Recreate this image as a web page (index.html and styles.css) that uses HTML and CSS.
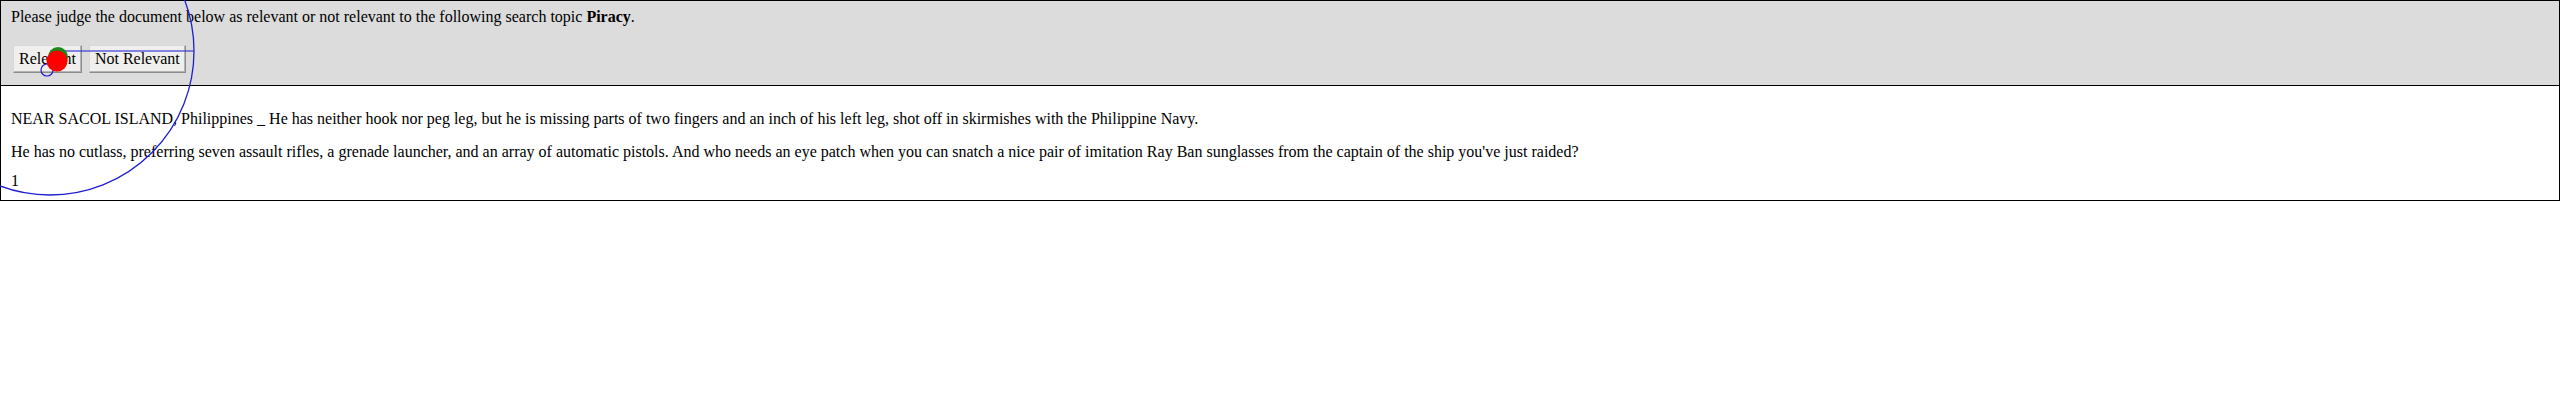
FILE: index.html
```html
<!DOCTYPE html>
<html lang="en">
<head>
<meta charset="utf-8">
<title>Relevance judgement</title>
<link rel="stylesheet" href="styles.css">
</head>
<body>
<div class="panel">
  <div class="header">
    <p class="prompt">Please judge the document below as relevant or not relevant to the following search topic <b>Piracy</b>.</p>
    <div class="actions">
      <button class="btn" type="button">Relevant</button>
      <button class="btn" type="button">Not Relevant</button>
    </div>
  </div>
  <div class="doc">
    <p class="para">NEAR SACOL ISLAND, Philippines _ He has neither hook nor peg leg, but he is missing parts of two fingers and an inch of his left leg, shot off in skirmishes with the Philippine Navy.</p>
    <p class="para">He has no cutlass, preferring seven assault rifles, a grenade launcher, and an array of automatic pistols. And who needs an eye patch when you can snatch a nice pair of imitation Ray Ban sunglasses from the captain of the ship you've just raided?</p>
    <p class="para page">1</p>
  </div>
</div>
<svg class="overlay" width="260" height="220" viewBox="0 0 260 220">
  <circle cx="50" cy="51" r="144" fill="none" stroke="#1e1ecf" stroke-width="1.3"/>
  <line x1="50" y1="51" x2="194" y2="51" stroke="#3a3ad8" stroke-width="1.5" opacity="0.8"/>
  <circle cx="47" cy="70" r="6" fill="none" stroke="#1e1ecf" stroke-width="1.2"/>
  <circle cx="58" cy="57" r="10" fill="#1a8a1a"/>
  <circle cx="57" cy="61" r="10.5" fill="#ff0000"/>
</svg>
</body>
</html>
```
FILE: styles.css
```css
html, body {
  margin: 0;
  padding: 0;
  background: #fff;
}

body {
  font-family: "Liberation Serif", "Times New Roman", serif;
  font-size: 16px;
  color: #000;
  position: relative;
}

.panel {
  border: 1px solid #000;
}

.header {
  background: #dcdcdc;
  padding: 7px 10px 12px;
  border-bottom: 1px solid #000;
}

.prompt {
  margin: 0;
  line-height: 18px;
}

.actions {
  display: flex;
  gap: 7px;
  margin-top: 19px;
  padding-left: 2px;
}

.btn {
  font-family: "Liberation Serif", "Times New Roman", serif;
  font-size: 16px;
  line-height: 18px;
  color: #000;
  background: #f0efed;
  border: 1px solid #8c8c8c;
  border-top-color: #d8d8d8;
  border-left-color: #d8d8d8;
  box-shadow: inset -1px -1px 0 #b4b4b4;
  padding: 4px 5px;
  margin: 0;
  height: 28px;
}

.doc {
  padding: 24px 10px 10px;
}

.para {
  margin: 0 0 15px;
  line-height: 18px;
}

.para.page {
  margin-top: -4px;
  margin-bottom: 0;
}

.overlay {
  position: absolute;
  left: 0;
  top: 0;
  pointer-events: none;
  overflow: visible;
}
```
